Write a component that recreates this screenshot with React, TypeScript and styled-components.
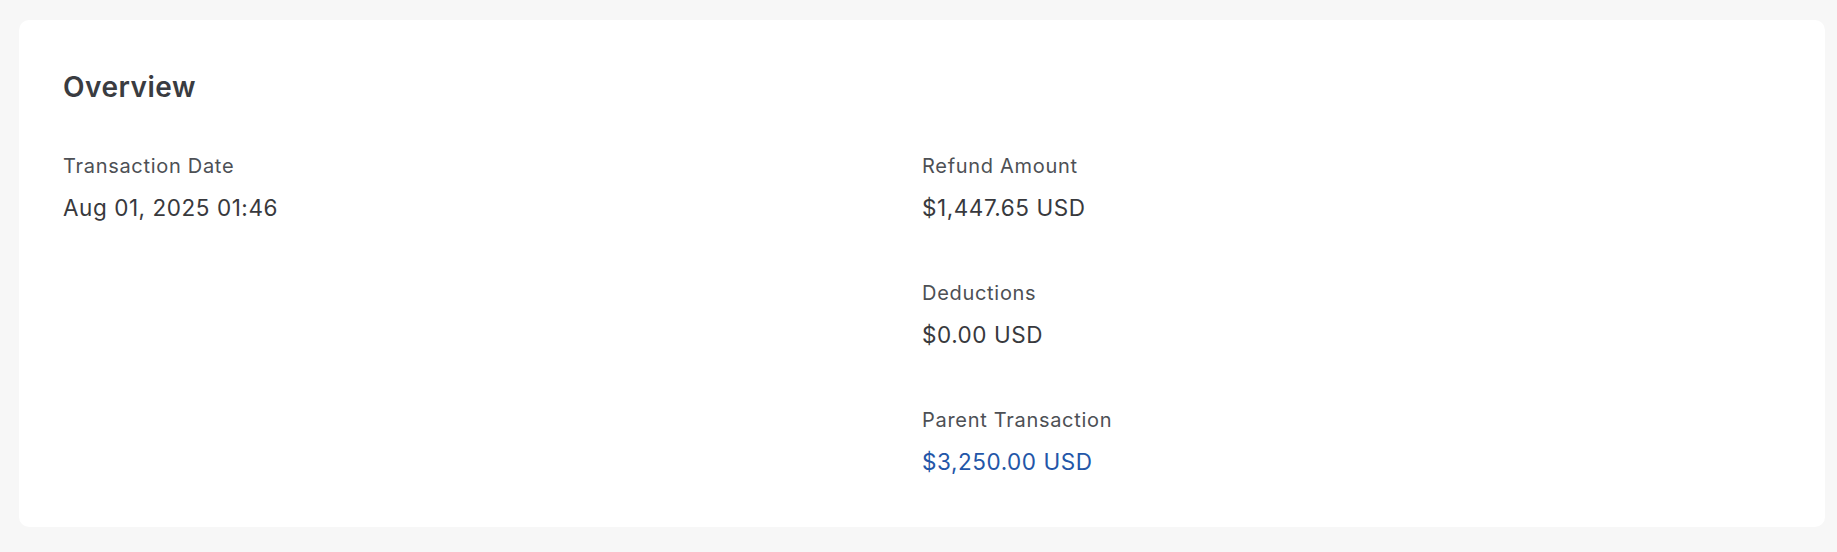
import React from "react";
import styled, { createGlobalStyle } from "styled-components";

const GlobalStyle = createGlobalStyle`
  html, body {
    margin: 0;
    padding: 0;
    background: #f7f7f7;
  }
  body {
    font-family: Inter, "Noto Sans", "Liberation Sans", sans-serif;
    -webkit-font-smoothing: antialiased;
  }
`;

const Page = styled.div`
  min-height: 552px;
  box-sizing: border-box;
  padding: 20px 12px 25px 19px;
  background: #f7f7f7;
`;

const Card = styled.section`
  background: #ffffff;
  border-radius: 10px;
  padding: 50px 44px 50px 44px;
`;

const Title = styled.h2`
  margin: 0 0 48px 0;
  font-size: 28px;
  line-height: 34px;
  font-weight: 600;
  color: #3a3c41;
  letter-spacing: 0.5px;
`;

const Grid = styled.div`
  display: grid;
  grid-template-columns: 1fr 1fr;
  column-gap: 0;
  align-items: start;
`;

const Column = styled.div`
  display: flex;
  flex-direction: column;
  gap: 56.5px;
`;

const Field = styled.div`
  display: flex;
  flex-direction: column;
  gap: 12.5px;
`;

const Label = styled.div`
  font-size: 20px;
  line-height: 28px;
  font-weight: 400;
  color: #4d5055;
  letter-spacing: 0.7px;
`;

const Value = styled.div<{ $link?: boolean }>`
  font-size: 22.5px;
  line-height: 30px;
  font-weight: 400;
  letter-spacing: 0.55px;
  color: ${(p) => (p.$link ? "#2356a8" : "#38393d")};
  cursor: ${(p) => (p.$link ? "pointer" : "default")};
`;

type Item = { label: string; value: string; link?: boolean };

const left: Item[] = [{ label: "Transaction Date", value: "Aug 01, 2025 01:46" }];
const right: Item[] = [
  { label: "Refund Amount", value: "$1,447.65 USD" },
  { label: "Deductions", value: "$0.00 USD" },
  { label: "Parent Transaction", value: "$3,250.00 USD", link: true },
];

const renderItems = (items: Item[]) =>
  items.map((it) => (
    <Field key={it.label}>
      <Label>{it.label}</Label>
      <Value $link={it.link}>{it.value}</Value>
    </Field>
  ));

export default function App() {
  return (
    <>
      <GlobalStyle />
      <Page>
        <Card>
          <Title>Overview</Title>
          <Grid>
            <Column>{renderItems(left)}</Column>
            <Column>{renderItems(right)}</Column>
          </Grid>
        </Card>
      </Page>
    </>
  );
}
